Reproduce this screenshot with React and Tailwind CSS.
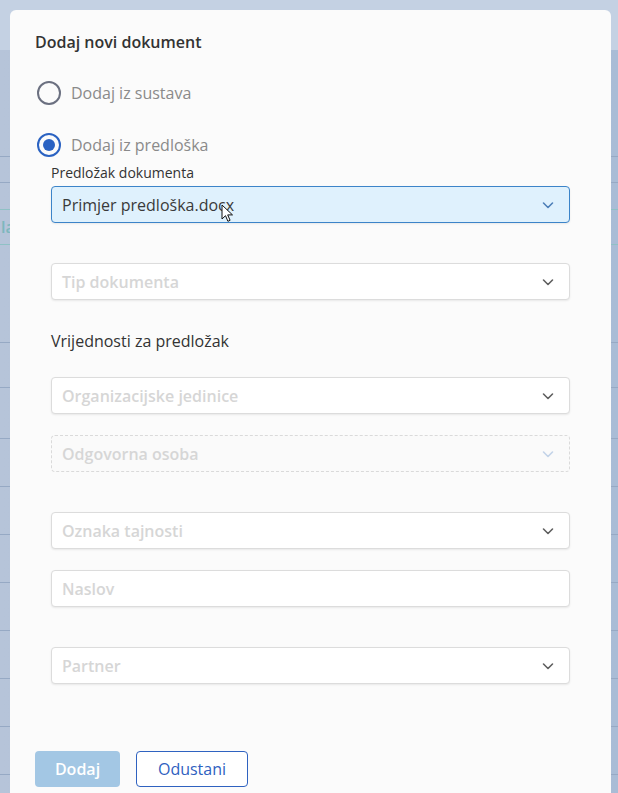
import { useState } from "react";

const Chevron = ({ className }) => (
  <svg width="14" height="14" viewBox="0 0 14 14" className={className} fill="none">
    <path d="M2.5 5l4.5 4.5L11.5 5" stroke="currentColor" strokeWidth="1.6" strokeLinecap="round" strokeLinejoin="round" />
  </svg>
);

const Select = ({ placeholder, value, active, disabled }) => {
  let box = "border border-[#dcdcdc] bg-white shadow-[0_1px_2px_rgba(0,0,0,0.08)]";
  if (active) box = "border border-[#3c84c9] bg-[#dff1fd] shadow-[0_1px_2px_rgba(0,0,0,0.08)]";
  if (disabled) box = "border border-dashed border-[#dadada] bg-[#fafafa]";
  return (
    <div className={`flex h-[37px] items-center justify-between rounded-[4px] pl-[10px] pr-[14px] ${box}`}>
      {value ? (
        <span className="text-[16px] text-[#3a3a3a]">{value}</span>
      ) : (
        <span className="text-[16px] font-semibold text-[#d6d6d6]">{placeholder}</span>
      )}
      {placeholder !== "Naslov" && (
        <Chevron
          className={active ? "text-[#4d7fb8]" : disabled ? "text-[#c3d3e8]" : "text-[#5f5f5f]"}
        />
      )}
    </div>
  );
};

const Radio = ({ checked, label, onClick }) => (
  <button onClick={onClick} className="flex items-center gap-[10px] text-left">
    {checked ? (
      <span className="flex h-[24px] w-[24px] items-center justify-center rounded-full border-[2px] border-[#2a62c2]">
        <span className="h-[12px] w-[12px] rounded-full bg-[#2a62c2]" />
      </span>
    ) : (
      <span className="h-[24px] w-[24px] rounded-full border-[2px] border-[#6b7080]" />
    )}
    <span className="text-[16px] text-[#8a8a8a]">{label}</span>
  </button>
);

const bgRows = [107, 26, 27, 35, 98, 45, 51, 48, 48, 48, 48, 48, 48, 48, 48];

const App = () => {
  const [source, setSource] = useState("predlozak");

  return (
    <div className="relative h-[793px] w-[618px] overflow-hidden bg-[#a9bcd6] font-['Open_Sans',sans-serif]">
      {/* page behind the modal */}
      <div className="h-[50px] bg-[#c4d1e3]" />
      {bgRows.map((h, i) => (
        <div
          key={i}
          style={{ height: h }}
          className={`flex items-center border-b ${i === 2 || i === 3 ? "border-[#8fc1c5]" : "border-[#96a9c4]"} bg-gradient-to-r from-[#b6c4d9] to-[#a9bcd6]`}
        >
          {i === 3 && <span className="pl-[1px] text-[16px] font-semibold text-[#7cb7bd]">la</span>}
        </div>
      ))}

      {/* modal */}
      <div className="absolute left-[10px] top-[10px] h-[800px] w-[601px] rounded-[6px] bg-[#fbfbfb] px-[25px] pt-[20px]">
        <h2 className="text-[16px] font-semibold text-[#333]">Dodaj novi dokument</h2>

        <div className="mt-[27px] flex flex-col gap-[28px] pl-[2px]">
          <Radio
            label="Dodaj iz sustava"
            checked={source === "sustav"}
            onClick={() => setSource("sustav")}
          />
          <Radio
            label="Dodaj iz predloška"
            checked={source === "predlozak"}
            onClick={() => setSource("predlozak")}
          />
        </div>

        <div className="pl-[16px] pr-[16px]">
          <p className="mt-[5px] text-[14px] text-[#333]">Predložak dokumenta</p>
          <div className="relative mt-[3px]">
            <Select value="Primjer predloška.docx" active />
            <svg className="absolute left-[170px] top-[18px]" width="12" height="19" viewBox="0 0 12 19">
              <path d="M1 1v14l3.5-3.3 2.4 5.6 2.2-1-2.4-5.4H11.5z" fill="#fff" stroke="#111" strokeWidth="1" strokeLinejoin="round" />
            </svg>
          </div>

          <div className="mt-[40px]">
            <Select placeholder="Tip dokumenta" />
          </div>

          <p className="mt-[29px] text-[16px] text-[#333]">Vrijednosti za predložak</p>

          <div className="mt-[24px] flex flex-col">
            <Select placeholder="Organizacijske jedinice" />
            <div className="mt-[21px]">
              <Select placeholder="Odgovorna osoba" disabled />
            </div>
            <div className="mt-[40px]">
              <Select placeholder="Oznaka tajnosti" />
            </div>
            <div className="mt-[21px]">
              <Select placeholder="Naslov" />
            </div>
            <div className="mt-[40px]">
              <Select placeholder="Partner" />
            </div>
          </div>
        </div>

        <div className="mt-[67px] flex gap-[16px]">
          <button className="h-[36px] w-[85px] rounded-[4px] bg-[#a3c7e4] text-[16px] font-semibold text-white">
            Dodaj
          </button>
          <button className="h-[36px] w-[112px] rounded-[4px] border border-[#2f62c0] bg-white text-[16px] text-[#2f5fbf]">
            Odustani
          </button>
        </div>
      </div>
    </div>
  );
};

export default App;
